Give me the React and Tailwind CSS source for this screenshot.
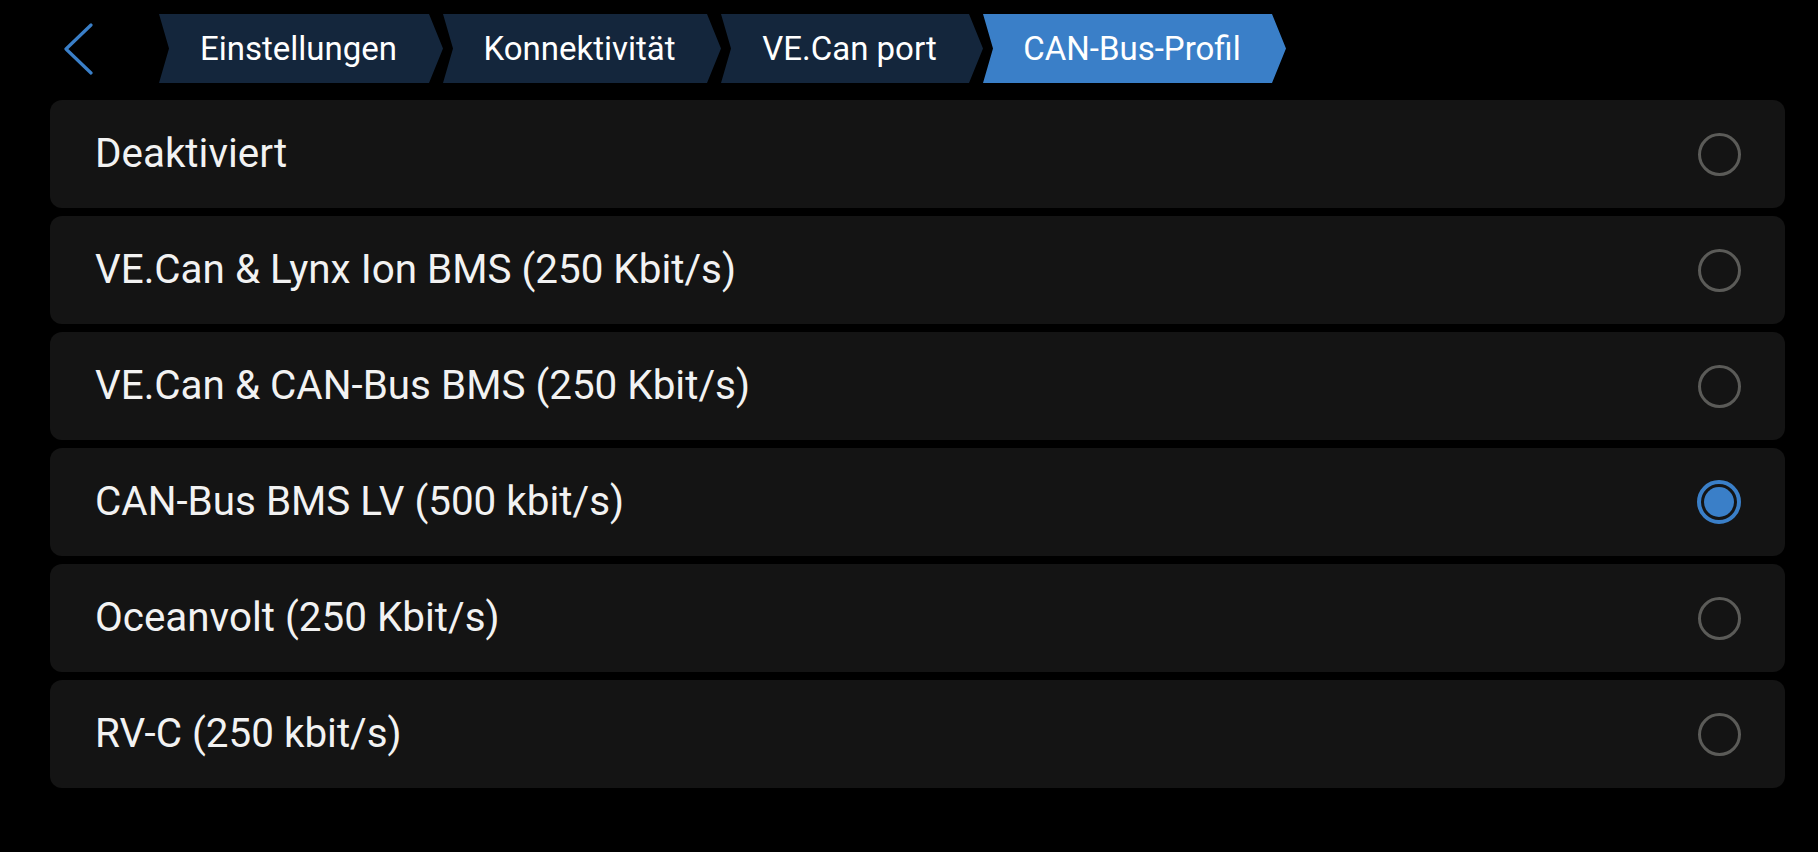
const crumbs = [
  { label: 'Einstellungen', width: 'w-[284px]', active: false },
  { label: 'Konnektivität', width: 'w-[278px]', active: false },
  { label: 'VE.Can port', width: 'w-[262px]', active: false },
  { label: 'CAN-Bus-Profil', width: 'w-[303px]', active: true },
];

const options = [
  'Deaktiviert',
  'VE.Can & Lynx Ion BMS (250 Kbit/s)',
  'VE.Can & CAN-Bus BMS (250 Kbit/s)',
  'CAN-Bus BMS LV (500 kbit/s)',
  'Oceanvolt (250 Kbit/s)',
  'RV-C (250 kbit/s)',
];

function Radio({ checked }) {
  if (checked) {
    return (
      <div className="w-[44px] h-[44px] rounded-full border-[4px] border-[#3a7fc8] p-[3px] shrink-0">
        <div className="w-full h-full rounded-full bg-[#3a7fc8]" />
      </div>
    );
  }
  return <div className="w-[43px] h-[43px] rounded-full border-[3px] border-[#5b5b58] shrink-0" />;
}

export default function App() {
  const selected = 3;

  return (
    <div className="min-h-[852px] w-full bg-black text-[#f2f2f2] [font-family:Roboto,sans-serif]">
      <div className="flex items-center pt-[14px]">
        <button className="pl-[63px] pr-[3px] flex items-center">
          <svg width="30" height="52" viewBox="0 0 30 52" fill="none">
            <path d="M28 2 L3 26 L28 50" stroke="#3a7fc8" strokeWidth="3.2" strokeLinecap="round" strokeLinejoin="round" />
          </svg>
        </button>
        <div className="flex ml-[63px]">
          {crumbs.map((c) => (
            <div
              key={c.label}
              className={`${c.width} h-[69px] flex items-center justify-center pr-[5px] text-[33px] leading-none text-white ${
                c.active ? 'bg-[#3a7fc8]' : 'bg-[#14263c]'
              } [clip-path:polygon(0_0,calc(100%_-_14px)_0,100%_50%,calc(100%_-_14px)_100%,0_100%,10px_50%)]`}
            >
              {c.label}
            </div>
          ))}
        </div>
      </div>

      <div className="flex flex-col gap-[8px] ml-[50px] mr-[33px] mt-[17px]">
        {options.map((label, idx) => (
          <div
            key={label}
            className="h-[108px] rounded-[12px] bg-[#141414] flex items-center justify-between pl-[45px] pr-[44px]"
          >
            <span className="text-[40.4px] leading-none">{label}</span>
            <Radio checked={idx === selected} />
          </div>
        ))}
      </div>
    </div>
  );
}
